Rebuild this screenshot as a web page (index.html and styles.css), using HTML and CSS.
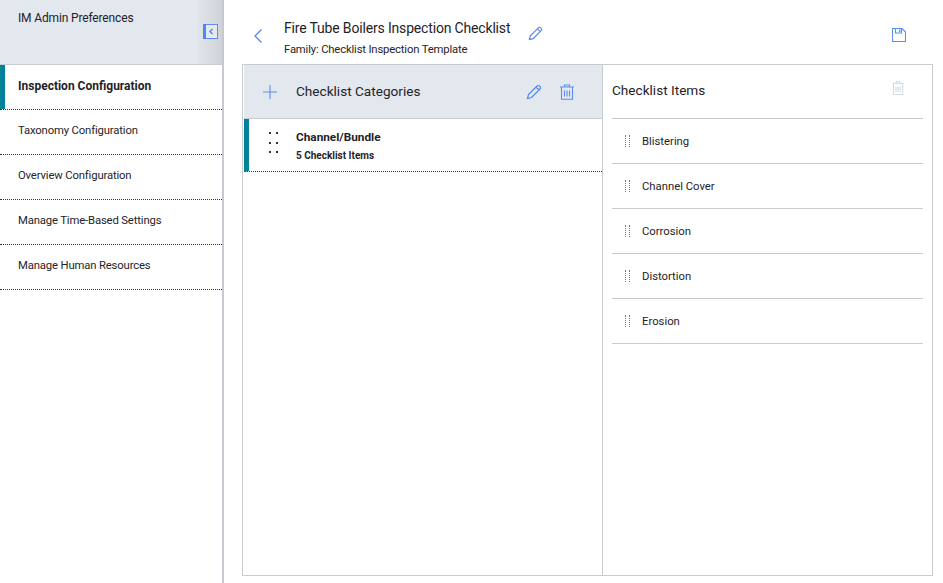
FILE: index.html
```html
<!DOCTYPE html>
<html lang="en">
<head>
<meta charset="utf-8">
<title>IM Admin Preferences</title>
<link rel="stylesheet" href="styles.css">
</head>
<body>
<div class="app">
  <aside class="sidebar">
    <div class="side-head">
      <div class="side-title">IM Admin Preferences</div>
      <button class="collapse" aria-label="Collapse">
        <svg width="15" height="15" viewBox="0 0 15 15"><rect x="0.5" y="0.5" width="14" height="14" fill="#e6eaf0" stroke="#5b8def"/><rect x="0" y="0" width="3" height="15" fill="#4f86f0"/><path d="M9.5 5 L7 7.5 L9.5 10" fill="none" stroke="#4f86f0" stroke-width="1.4"/></svg>
      </button>
    </div>
    <nav>
      <div class="nav-item active">Inspection Configuration</div>
      <div class="nav-item">Taxonomy Configuration</div>
      <div class="nav-item">Overview Configuration</div>
      <div class="nav-item">Manage Time-Based Settings</div>
      <div class="nav-item">Manage Human Resources</div>
    </nav>
  </aside>
  <main class="main">
    <header class="top">
      <svg class="back" width="10" height="16" viewBox="0 0 10 16"><path d="M8.5 1.5 L2 8 L8.5 14.5" fill="none" stroke="#4f86f0" stroke-width="1.3"/></svg>
      <div class="top-text">
        <div class="top-title">Fire Tube Boilers Inspection Checklist</div>
        <div class="top-sub">Family: Checklist Inspection Template</div>
      </div>
      <svg class="top-edit" width="15" height="15" viewBox="0 0 16 16"><path d="M1.5 14.5 L2.5 10.5 L11 2 Q12.2 1 13.5 2 L14.2 2.7 Q15 4 14 5 L5.5 13.5 Z M10 3 L13 6" fill="none" stroke="#4f86f0" stroke-width="1.2"/></svg>
      <svg class="save" width="14" height="14" viewBox="0 0 14 14"><path d="M0.5 0.5 H10 L13.5 4 V13.5 H0.5 Z" fill="none" stroke="#5b8def" stroke-width="1.1"/><path d="M3.5 0.5 V5 H9.5 V0.5" fill="none" stroke="#5b8def" stroke-width="1.1"/><rect x="7" y="1.5" width="1.4" height="2.4" fill="#5b8def"/></svg>
    </header>
    <section class="panel">
      <div class="cats">
        <div class="cats-head">
          <svg class="plus" width="14" height="14" viewBox="0 0 14 14"><path d="M7 0 V14 M0 7 H14" stroke="#5b8def" stroke-width="1.1" fill="none"/></svg>
          <h2 class="cats-title">Checklist Categories</h2>
          <svg class="cat-edit" width="16" height="16" viewBox="0 0 16 16"><path d="M1.5 14.5 L2.5 10.5 L11 2 Q12.2 1 13.5 2 L14.2 2.7 Q15 4 14 5 L5.5 13.5 Z M10 3 L13 6" fill="none" stroke="#4f86f0" stroke-width="1.2"/></svg>
          <svg class="cat-del" width="14" height="16" viewBox="0 0 14 16"><path d="M0 3 H14 M4.5 3 V1 H9.5 V3 M1.5 3 V15.2 H12.5 V3 M4.5 6.5 V12.5 M7 6.5 V12.5 M9.5 6.5 V12.5" fill="none" stroke="#5b8def" stroke-width="1.1"/></svg>
        </div>
        <div class="cat-row">
          <svg class="grip-lg" width="9" height="22" viewBox="0 0 9 22"><g fill="#333"><rect x="0" y="0" width="2" height="2"/><rect x="7" y="0" width="2" height="2"/><rect x="0" y="10" width="2" height="2"/><rect x="7" y="10" width="2" height="2"/><rect x="0" y="19" width="2" height="2"/><rect x="7" y="19" width="2" height="2"/></g></svg>
          <div>
            <div class="cat-name">Channel/Bundle</div>
            <div class="cat-count">5 Checklist Items</div>
          </div>
        </div>
      </div>
      <div class="items">
        <div class="items-head">
          <h2 class="items-title">Checklist Items</h2>
          <svg class="items-del" width="12" height="14" viewBox="0 0 12 15"><path d="M0 2.5 H12 M4 2.5 V0.7 H8 V2.5 M1 2.5 V14.5 H11 V2.5 M3.8 6 V12 M6 6 V12 M8.2 6 V12" fill="none" stroke="#cfd5db" stroke-width="1"/></svg>
        </div>
        <div class="item"><span class="grip"></span>Blistering</div>
        <div class="item"><span class="grip"></span>Channel Cover</div>
        <div class="item"><span class="grip"></span>Corrosion</div>
        <div class="item"><span class="grip"></span>Distortion</div>
        <div class="item"><span class="grip"></span>Erosion</div>
      </div>
    </section>
  </main>
</div>
</body>
</html>
```

FILE: styles.css
```css
* { box-sizing: border-box; }
html, body { margin: 0; height: 100%; }
body {
  font-family: Roboto, "Noto Sans", sans-serif;
  color: #1f2328;
  background: #fff;
  overflow: hidden;
}
.app { display: flex; width: 943px; height: 583px; }

.sidebar {
  width: 224px;
  flex: none;
  border-right: 2px solid #c5cad0;
}
.side-head {
  height: 65px;
  padding: 11px 0 0 18px;
  display: flex;
  justify-content: space-between;
  background: linear-gradient(90deg, #e3e7ee 0, #e3e7ee 88%, #cfd3d8 100%);
  border-bottom: 1px solid #c9cdd2;
}
.side-title { font-size: 12px; line-height: 15px; letter-spacing: -0.15px; }
.collapse {
  width: 15px;
  height: 15px;
  padding: 0;
  border: 0;
  background: none;
  margin: 13px 4px 0 0;
  display: block;
}
.collapse svg { display: block; }
.nav-item {
  height: 45px;
  padding: 0 0 3px 18px;
  display: flex;
  align-items: center;
  font-size: 11.3px;
  letter-spacing: -0.15px;
  border-bottom: 1px dotted #333;
}
.nav-item.active {
  font-size: 12px;
  letter-spacing: 0;
  font-weight: 700;
  box-shadow: inset 5px 0 0 #00829b;
}

.main {
  flex: 1;
  min-width: 0;
  padding: 0 10px 7px 18px;
  display: flex;
  flex-direction: column;
}
.top {
  height: 64px;
  flex: none;
  display: flex;
  align-items: flex-start;
}
.back { margin: 28px 0 0 11px; }
.top-text { margin: 20px 0 0 21px; }
.top-title { font-size: 14px; line-height: 17px; letter-spacing: -0.17px; }
.top-sub { font-size: 11.3px; line-height: 15px; margin-top: 5px; letter-spacing: -0.17px; }
.top-edit { margin: 26px 0 0 18px; }
.save { margin: 28px 27px 0 auto; }

.panel {
  flex: 1;
  display: flex;
  border: 1px solid #c8cbcf;
  min-height: 0;
}
.cats {
  width: 360px;
  flex: none;
  padding-left: 1px;
  border-right: 1px solid #c8cbcf;
}
.cats-head {
  height: 54px;
  background: #e3e7ee;
  border-bottom: 1px solid #c8cbcf;
  display: flex;
  align-items: center;
}
.plus { margin-left: 19px; }
.cats-title {
  margin: 0 0 2px 19px;
  font-size: 13.6px;
  font-weight: 400;
}
.cat-edit { margin-left: auto; }
.cat-del { margin: 0 28px 0 18px; }
.cat-row {
  height: 53px;
  display: flex;
  align-items: flex-start;
  border-left: 5px solid #00829b;
  border-bottom: 1px dotted #333;
}
.grip-lg { margin: 13px 0 0 20px; flex: none; }
.cat-name { font-size: 11.8px; line-height: 14px; font-weight: 700; margin: 11px 0 0 18px; }
.cat-count { font-size: 10px; line-height: 12px; font-weight: 700; margin: 6px 0 0 18px; }

.items {
  flex: 1;
  padding: 0 9px;
}
.items-head {
  height: 54px;
  border-bottom: 1px solid #c8cbcf;
  display: flex;
  justify-content: space-between;
  align-items: flex-start;
}
.items-title {
  margin: 16px 0 0;
  font-size: 13.6px;
  line-height: 18px;
  font-weight: 400;
}
.items-del { margin: 16px 19px 0 0; }
.item {
  height: 45px;
  border-bottom: 1px solid #c8cbcf;
  display: flex;
  align-items: center;
  font-size: 11.3px;
  padding: 1px 0 0 30px;
}
.grip {
  width: 5px;
  height: 12px;
  margin: -2px 12px 0 -17px;
  flex: none;
  border-left: 1px dotted #777;
  border-right: 1px dotted #777;
}
```
